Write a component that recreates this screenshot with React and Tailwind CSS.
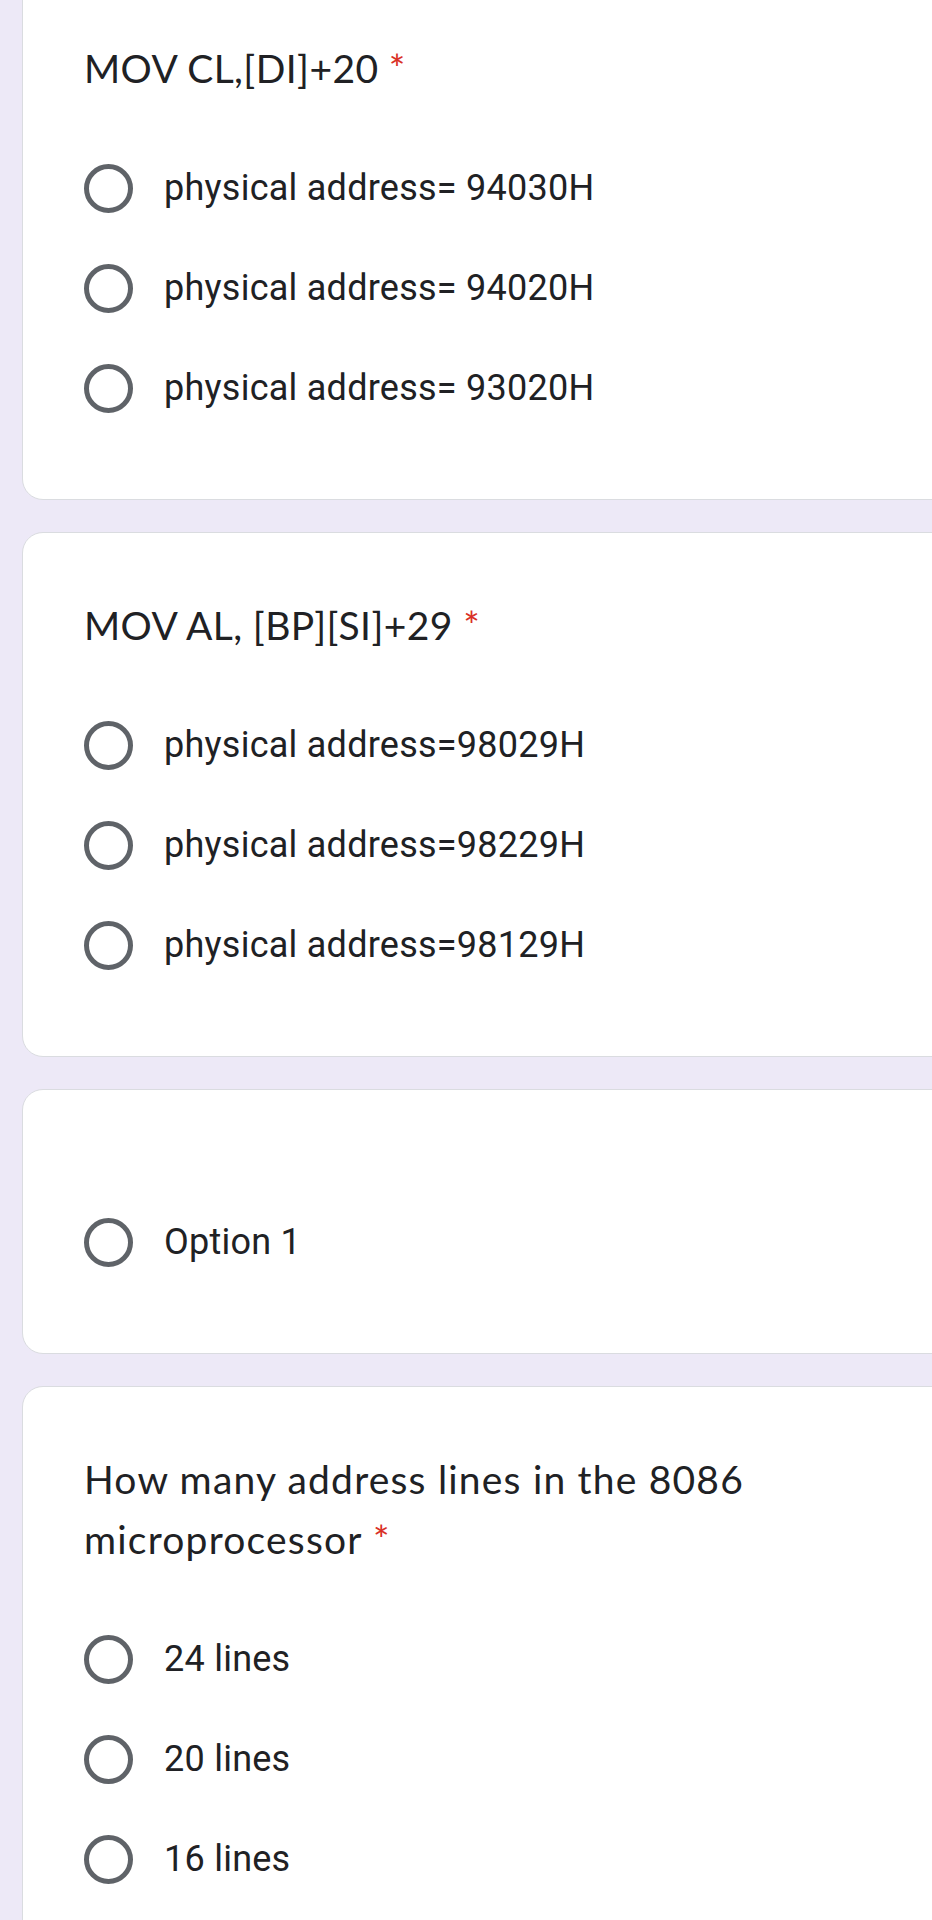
import React from "react";

const Radio = () => (
  <div className="w-[49px] h-[49px] shrink-0 rounded-full border-[5px] border-[#5f6368]" />
);

const Option = ({ label }) => (
  <div className="flex items-center h-[100px]">
    <Radio />
    <span
      className="ml-[31px] text-[36px] tracking-[0.25px] text-[#202124] whitespace-nowrap"
      style={{ fontFamily: "Roboto, 'Noto Sans', sans-serif" }}
    >
      {label}
    </span>
  </div>
);

const Title = ({ lines, wide }) => (
  <div
    className={`mb-[40px] text-[39px] leading-[60px] text-[#202124] ${
      wide ? "tracking-[1.2px]" : "tracking-[0.4px]"
    }`}
    style={{ fontFamily: "Lato, 'Open Sans', sans-serif" }}
  >
    {lines.map((l, i) => (
      <div key={i} className="whitespace-nowrap">
        {l}
        {i === lines.length - 1 && <span className="text-[#d93025]"> *</span>}
      </div>
    ))}
  </div>
);

const Card = ({ title, options, wide, className = "" }) => (
  <div
    className={`ml-[22px] w-[960px] shrink-0 bg-white border border-[#dadce0] rounded-[21px] pt-[62px] pb-[61px] pl-[61px] ${className}`}
  >
    {title ? <Title lines={title} wide={wide} /> : <div className="mb-[40px]" />}
    {options.map((o) => (
      <Option key={o} label={o} />
    ))}
  </div>
);

export default function App() {
  return (
    <div className="w-[932px] h-[1920px] overflow-hidden bg-[#ede9f7] flex flex-col">
      <Card
        className="-mt-[25px]"
        title={["MOV CL,[DI]+20"]}
        options={[
          "physical address= 94030H",
          "physical address= 94020H",
          "physical address= 93020H",
        ]}
      />
      <Card
        className="mt-[32px]"
        title={["MOV AL, [BP][SI]+29"]}
        options={[
          "physical address=98029H",
          "physical address=98229H",
          "physical address=98129H",
        ]}
      />
      <Card className="mt-[32px]" options={["Option 1"]} />
      <Card
        className="mt-[32px]"
        wide
        title={["How many address lines in the 8086", "microprocessor"]}
        options={["24 lines", "20 lines", "16 lines"]}
      />
    </div>
  );
}
